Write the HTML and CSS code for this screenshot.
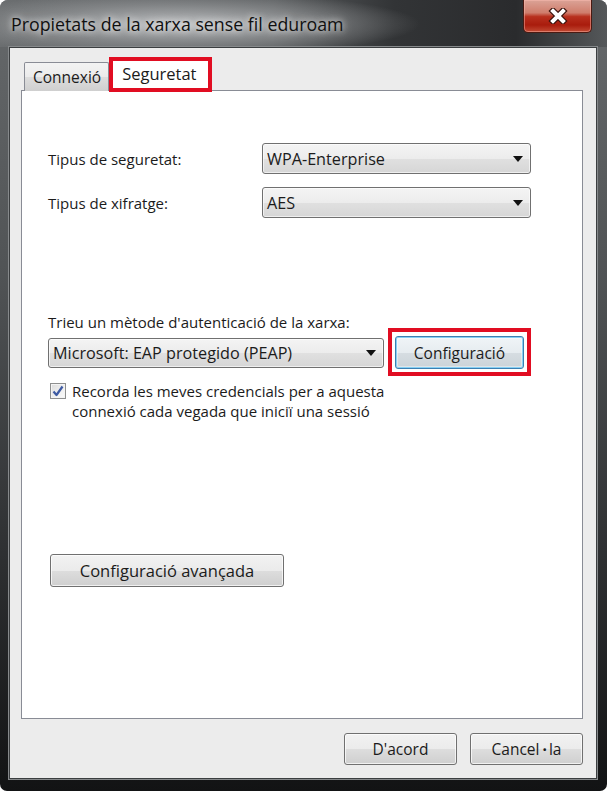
FILE: index.html
```html
<!DOCTYPE html>
<html lang="ca">
<head>
<meta charset="utf-8">
<title>Propietats de la xarxa sense fil eduroam</title>
<link rel="stylesheet" href="styles.css">
</head>
<body>
<div class="window">
  <div class="titlebar">
    <span class="title">Propietats de la xarxa sense fil eduroam</span>
    <button class="close" aria-label="Tanca">
      <svg width="20" height="16" viewBox="0 0 20 16">
        <path d="M5 3 L15 13 M15 3 L5 13" stroke="#3b140e" stroke-width="6.4" stroke-linecap="square" fill="none"/>
        <path d="M5 3 L15 13 M15 3 L5 13" stroke="#ffffff" stroke-width="4" stroke-linecap="square" fill="none"/>
      </svg>
    </button>
  </div>
  <div class="client">
    <div class="tabs">
      <div class="tab">Connexió</div>
      <div class="tab active">Seguretat</div>
    </div>
    <div class="page">
      <div class="grid">
        <span class="label">Tipus de seguretat:</span>
        <div class="combo"><span>WPA-Enterprise</span><i class="arrow"></i></div>
        <span class="label">Tipus de xifratge:</span>
        <div class="combo"><span>AES</span><i class="arrow"></i></div>
      </div>
      <div class="label auth-label">Trieu un mètode d'autenticació de la xarxa:</div>
      <div class="auth-row">
        <div class="combo combo-eap"><span>Microsoft: EAP protegido (PEAP)</span><i class="arrow"></i></div>
        <div class="highlight-wrap">
          <button class="btn btn-focus btn-config">Configuració</button>
          <span class="highlight"></span>
        </div>
      </div>
      <div class="check-row">
        <span class="checkbox">
          <svg width="12" height="12" viewBox="0 0 12 12"><path d="M1.5 6.5 L4.5 10 L10.5 1.5" stroke="#3d5aa3" stroke-width="2.2" fill="none" stroke-linejoin="round"/></svg>
        </span>
        <span class="check-text">Recorda les meves credencials per a aquesta<br>connexió cada vegada que iniciï una sessió</span>
      </div>
      <button class="btn btn-adv">Configuració avançada</button>
    </div>
    <div class="footer">
      <button class="btn btn-foot">D'acord</button>
      <button class="btn btn-foot">Cancel<span class="middot">·</span>la</button>
    </div>
  </div>
</div>
</body>
</html>
```

FILE: styles.css
```css
html, body {
  margin: 0;
  padding: 0;
  background: #ffffff;
}

body {
  font-family: "Open Sans", "Noto Sans", sans-serif;
  font-size: 15px;
  color: #1b1b1b;
}

.window {
  width: 607px;
  height: 791px;
  box-sizing: border-box;
  border-radius: 8px 8px 7px 7px;
  background: linear-gradient(to bottom, #66696b 0%, #505355 35%, #2e3032 70%, #121314 100%);
  display: flex;
  flex-direction: column;
  padding: 0 10px 12px 9px;
  overflow: hidden;
}

.titlebar {
  height: 47px;
  display: flex;
  align-items: flex-start;
  margin: 0 -10px 0 -9px;
  background:
    radial-gradient(ellipse 240px 32px at 180px 24px, rgba(200,202,204,0.85) 0%, rgba(160,162,164,0.5) 60%, rgba(150,152,154,0) 100%),
    linear-gradient(to right, #6b6e70 0%, #5a5d5f 45%, #323436 65%, #2a2b2d 85%, #55585a 100%);
}

.title {
  margin-top: 12px;
  padding-left: 11px;
  font-size: 17.8px;
  line-height: 24px;
  color: #101010;
  text-shadow: 0 0 6px rgba(255,255,255,0.9), 0 0 12px rgba(255,255,255,0.6);
  white-space: nowrap;
}

.close {
  margin-left: auto;
  margin-right: 15px;
  width: 69px;
  height: 33px;
  padding: 0;
  border: 1px solid #4a1a12;
  border-top: none;
  border-radius: 0 0 5px 5px;
  background: linear-gradient(to bottom, #dba397 0%, #cf7d6c 40%, #b8301e 52%, #a91c0d 78%, #c24a34 100%);
  box-shadow: inset 0 0 0 1px rgba(255,190,180,0.45);
  display: flex;
  align-items: center;
  justify-content: center;
}

.client {
  flex: 1;
  background: #ececec;
  border: 1px solid #3b3e40;
  box-shadow: 0 0 0 1px #86898b;
  display: flex;
  flex-direction: column;
  padding: 0 13px 12px 11px;
}

.tabs {
  display: flex;
  align-items: flex-end;
  margin-top: 9px;
  padding-left: 3px;
  margin-bottom: -2px;
  position: relative;
  z-index: 1;
}

.tab {
  height: 29px;
  box-sizing: border-box;
  padding: 0 7px 0 8px;
  margin-bottom: 1px;
  border: 1px solid #898c95;
  border-bottom: none;
  background: linear-gradient(to bottom, #f3f3f3 0%, #ebebeb 50%, #dddddd 51%, #cfcfcf 100%);
  line-height: 29px;
  font-size: 15.5px;
  color: #1b1b1b;
  border-radius: 2px 2px 0 0;
}

.tab.active {
  height: 35px;
  width: 103px;
  margin-bottom: 0;
  border: 4px solid #e10d22;
  background: #ffffff;
  border-radius: 0;
  padding: 0 0 0 9px;
  line-height: 25px;
  font-size: 16.5px;
}

.page {
  height: 629px;
  box-sizing: border-box;
  background: #ffffff;
  border: 1px solid #898c95;
  padding: 52px 50px 0 26px;
  display: flex;
  flex-direction: column;
  align-items: flex-start;
}

.grid {
  display: grid;
  grid-template-columns: 214px 269px;
  row-gap: 13px;
  align-items: center;
}

.label {
  line-height: 20px;
  color: #1b1b1b;
}

.combo {
  height: 31px;
  box-sizing: border-box;
  border: 1px solid #707070;
  border-radius: 3px;
  background: linear-gradient(to bottom, #f4f4f4 0%, #ececec 50%, #e0e0e0 51%, #d6d6d6 100%);
  box-shadow: inset 0 0 0 1px rgba(255,255,255,0.6);
  display: flex;
  align-items: center;
  padding: 0 6px 0 4px;
  line-height: 20px;
  font-size: 16.2px;
}

.combo span {
  flex: 1;
  white-space: nowrap;
}

.arrow {
  width: 0;
  height: 0;
  border-left: 5px solid transparent;
  border-right: 5px solid transparent;
  border-top: 6px solid #111111;
  margin-right: 1px;
}

.auth-label {
  margin-top: 94px;
}

.auth-row {
  display: flex;
  align-items: center;
  margin-top: 4px;
}

.combo-eap {
  width: 336px;
  height: 30px;
  margin-right: 11px;
}

.highlight-wrap {
  position: relative;
  display: flex;
}

.highlight {
  position: absolute;
  left: -7px;
  top: -8px;
  right: -7px;
  bottom: -7px;
  border: 4px solid #e10d22;
  pointer-events: none;
}

.btn {
  font-family: inherit;
  font-size: 15.5px;
  color: #1b1b1b;
  height: 33px;
  box-sizing: border-box;
  border: 1px solid #707070;
  border-radius: 3px;
  background: linear-gradient(to bottom, #f2f2f2 0%, #ebebeb 50%, #dddddd 51%, #cfcfcf 100%);
  box-shadow: inset 0 0 0 1px rgba(255,255,255,0.7);
  padding: 0;
  line-height: 20px;
}

.btn-focus {
  border-color: #3c7fb1;
  box-shadow: inset 0 0 0 1px #86d0f4, inset 0 0 0 2px rgba(255,255,255,0.4);
  background: linear-gradient(to bottom, #f0f4f7 0%, #e6ecf0 50%, #d6dde2 51%, #cbd3d8 100%);
}

.btn-config {
  width: 129px;
}

.check-row {
  display: flex;
  align-items: flex-start;
  margin-top: 12px;
  margin-left: 2px;
}

.checkbox {
  width: 16px;
  height: 16px;
  box-sizing: border-box;
  margin-top: 2px;
  border: 1px solid #8e8f8f;
  background: linear-gradient(135deg, #dcdcdc 0%, #f0f0f0 60%, #fbfbfb 100%);
  box-shadow: inset 0 0 0 1px #f4f4f4;
  display: flex;
  align-items: center;
  justify-content: center;
}

.check-text {
  margin-left: 6px;
  line-height: 20px;
}

.btn-adv {
  width: 234px;
  margin-top: 133px;
  margin-left: 2px;
  font-size: 16.5px;
}

.footer {
  display: flex;
  justify-content: flex-end;
  gap: 13px;
  margin-top: 14px;
}

.btn-foot {
  width: 113px;
  height: 32px;
}

.middot {
  padding: 0 2px 0 3px;
  font-weight: 700;
}
```
